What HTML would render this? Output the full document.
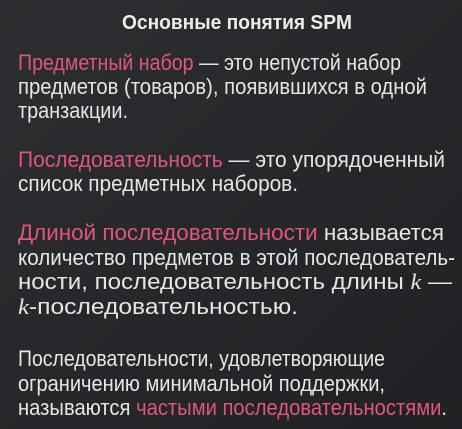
<!DOCTYPE html><html><head><meta charset="utf-8"><style>
html,body{margin:0;padding:0;width:462px;height:429px;overflow:hidden;background:#25272a}
svg{display:block}
text{font-family:"Liberation Sans","DejaVu Sans",sans-serif;font-size:22.5px;fill:#e6e6e6}
.p{fill:#e0557f}
</style></head><body>
<svg width="462" height="429" viewBox="0 0 462 429">
<defs><linearGradient id="g" x1="0" y1="0" x2="1" y2="1"><stop offset="0" stop-color="#2c2e31"/><stop offset="1" stop-color="#1f2124"/></linearGradient></defs>
<rect width="462" height="429" fill="url(#g)"/>
<text x="122" y="29" textLength="230" lengthAdjust="spacingAndGlyphs" style="font-weight:bold;font-size:20px;fill:#ececec">Основные понятия SPM</text>
<text x="18" y="70" textLength="383" lengthAdjust="spacingAndGlyphs"><tspan class="p">Предметный набор</tspan> — это непустой набор</text>
<text x="18" y="94" textLength="409" lengthAdjust="spacingAndGlyphs">предметов (товаров), появившихся в одной</text>
<text x="18" y="118" textLength="110" lengthAdjust="spacingAndGlyphs">транзакции.</text>
<text x="18" y="167" textLength="427" lengthAdjust="spacingAndGlyphs"><tspan class="p">Последовательность</tspan> — это упорядоченный</text>
<text x="18" y="191" textLength="280" lengthAdjust="spacingAndGlyphs">список предметных наборов.</text>
<text x="18" y="240" textLength="426" lengthAdjust="spacingAndGlyphs"><tspan class="p">Длиной последовательности</tspan> называется</text>
<text x="18" y="265" textLength="437" lengthAdjust="spacingAndGlyphs">количество предметов в этой последователь-</text>
<text x="18" y="289" textLength="434" lengthAdjust="spacingAndGlyphs">ности, последовательность длины <tspan font-style="italic" font-family="Liberation Serif">k</tspan> —</text>
<text x="18" y="314" textLength="280" lengthAdjust="spacingAndGlyphs"><tspan font-style="italic" font-family="Liberation Serif">k</tspan>-последовательностью.</text>
<text x="18" y="366" textLength="367" lengthAdjust="spacingAndGlyphs">Последовательности, удовлетворяющие</text>
<text x="18" y="391" textLength="367" lengthAdjust="spacingAndGlyphs">ограничению минимальной поддержки,</text>
<text x="18" y="415" textLength="429" lengthAdjust="spacingAndGlyphs">называются <tspan class="p">частыми последовательностями</tspan>.</text>
</svg>
</body></html>
